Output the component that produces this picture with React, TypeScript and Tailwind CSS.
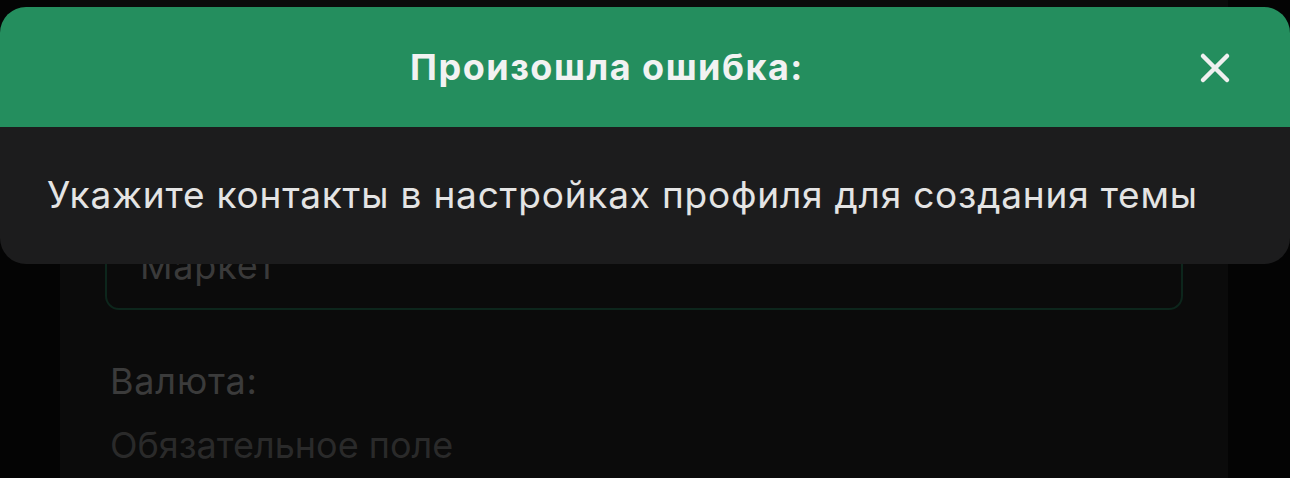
import React from "react";

export default function App() {
  return (
    <div
      className="relative w-[1290px] h-[478px] overflow-hidden bg-[#040404]"
      style={{ fontFamily: "Inter, 'Noto Sans', sans-serif" }}
    >
      {/* background form panel */}
      <div className="absolute left-[60px] top-[0px] w-[1168px] h-[478px] bg-[#0b0b0b]">
        <div className="ml-[45px] mt-[200px] w-[1078px] h-[110px] rounded-[14px] border-2 border-[#0d261c] flex items-end justify-between pl-[33px] pr-[48px] pb-[22px]">
          <span className="text-[36px] leading-[40px] text-[#3a3a3a] tracking-[0.8px]">Маркет</span>
          <svg width="18" height="18" viewBox="0 0 24 24" className="mb-[24px]">
            <path d="M6 9l6 6 6-6" stroke="#262626" strokeWidth="3" fill="none" strokeLinecap="round" />
          </svg>
        </div>
        <div className="ml-[50px] mt-[51px] text-[36px] leading-[40px] text-[#3b3b3b] tracking-[0.8px]">Валюта:</div>
        <div className="ml-[50px] mt-[24px] text-[36px] leading-[40px] text-[#2a2a2a] tracking-[0px]">Обязательное поле</div>
      </div>

      {/* toast */}
      <div className="absolute left-0 top-[7px] w-[1290px] rounded-[26px] overflow-hidden">
        <div className="h-[120px] bg-[#248e5e] flex items-center relative">
          <div className="flex-1 text-center pr-[76px] text-[36px] font-bold text-[#f2f2f2] tracking-[1.5px]">
            Произошла ошибка:
          </div>
          <svg
            width="32"
            height="32"
            viewBox="0 0 32 32"
            className="absolute left-[1199px] top-[45px]"
          >
            <path d="M4 4L28 28M28 4L4 28" stroke="#f0f0f0" strokeWidth="4.5" strokeLinecap="round" />
          </svg>
        </div>
        <div className="h-[137px] bg-[#1c1c1d] flex items-center px-[47px] pb-[2px]">
          <span className="text-[37px] text-[#e4e4e4] tracking-[0.8px] whitespace-nowrap">
            Укажите контакты в настройках профиля для создания темы
          </span>
        </div>
      </div>
    </div>
  );
}
